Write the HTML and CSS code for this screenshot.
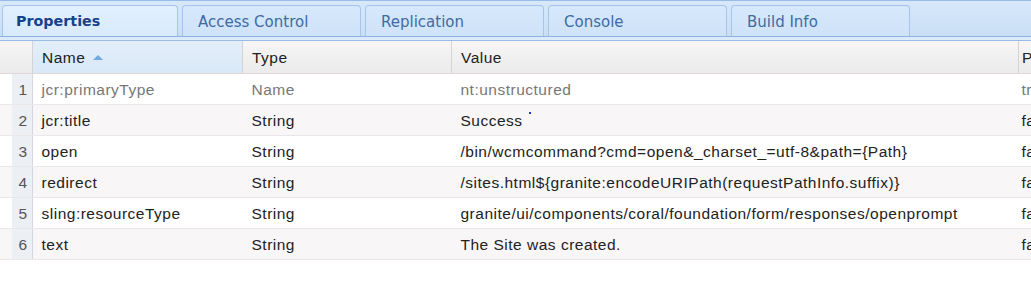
FILE: index.html
```html
<!DOCTYPE html>
<html lang="en">
<head>
    <meta charset="UTF-8">
    <title>CRXDE Properties</title>
    <link rel="stylesheet" href="styles.css">
</head>
<body>
    <div class="tabbar">
        <div class="tab active">Properties</div>
        <div class="tab">Access Control</div>
        <div class="tab">Replication</div>
        <div class="tab">Console</div>
        <div class="tab">Build Info</div>
    </div>
    <div class="tabbar-foot"></div>

    <div class="grid">
        <table>
            <thead>
                <tr>
                    <th class="num"><span></span></th>
                    <th class="col-name sorted">Name <span class="arrow"></span></th>
                    <th class="col-type">Type</th>
                    <th class="col-value">Value</th>
                    <th class="col-extra">P</th>
                </tr>
            </thead>
            <tbody>
                <tr class="dim">
                    <td class="num"><span>1</span></td>
                    <td>jcr:primaryType</td>
                    <td>Name</td>
                    <td>nt:unstructured</td>
                    <td class="extra">true</td>
                </tr>
                <tr>
                    <td class="num"><span>2</span></td>
                    <td>jcr:title</td>
                    <td>String</td>
                    <td>Success <span class="dot"></span></td>
                    <td class="extra">false</td>
                </tr>
                <tr>
                    <td class="num"><span>3</span></td>
                    <td>open</td>
                    <td>String</td>
                    <td>/bin/wcmcommand?cmd=open&amp;_charset_=utf-8&amp;path={Path}</td>
                    <td class="extra">false</td>
                </tr>
                <tr>
                    <td class="num"><span>4</span></td>
                    <td>redirect</td>
                    <td>String</td>
                    <td>/sites.html${granite:encodeURIPath(requestPathInfo.suffix)}</td>
                    <td class="extra">false</td>
                </tr>
                <tr>
                    <td class="num"><span>5</span></td>
                    <td>sling:resourceType</td>
                    <td>String</td>
                    <td>granite/ui/components/coral/foundation/form/responses/openprompt</td>
                    <td class="extra">false</td>
                </tr>
                <tr>
                    <td class="num"><span>6</span></td>
                    <td>text</td>
                    <td>String</td>
                    <td>The Site was created.</td>
                    <td class="extra">false</td>
                </tr>
            </tbody>
        </table>
    </div>
</body>
</html>
```

FILE: styles.css
```css
body {
    margin: 0;
    padding: 0;
    background: #fff;
    font-family: "Liberation Sans", Arial, sans-serif;
    overflow: hidden;
}

.tabbar {
    display: flex;
    gap: 4px;
    height: 31px;
    padding: 4px 0 0 2px;
    border-top: 1px solid #99bbe8;
    background: linear-gradient(#d7e8fa, #c9def5);
    border-bottom: 1px solid #8db2e3;
}

.tab {
    width: 162px;
    padding: 7px 0 0 15px;
    border: 1px solid #a7c4ea;
    border-bottom: none;
    border-radius: 4px 4px 0 0;
    background: linear-gradient(#d5e8fc, #cfe3f8);
    color: #416aa3;
    font-family: "DejaVu Sans", Tahoma, sans-serif;
    font-size: 15px;
    box-sizing: content-box;
}

.tab.active {
    width: 161px;
    padding-left: 13px;
    background: linear-gradient(#e2f0fe, #d8eafc);
    color: #15428b;
    font-weight: bold;
    font-size: 14.3px;
}

.tabbar-foot {
    height: 3px;
    background: #dbebfc;
    border-bottom: 1px solid #99bbe8;
}

.grid {
    width: 1031px;
    overflow: hidden;
}

table {
    border-collapse: collapse;
    table-layout: fixed;
    width: 1100px;
    font-size: 15.5px;
    letter-spacing: 0.5px;
}

th {
    height: 31px;
    padding: 1px 0 0 9px;
    text-align: left;
    font-weight: normal;
    color: #222;
    background: linear-gradient(#f7f5f6, #ebebeb);
    border-right: 1px solid #d6d3d3;
    border-bottom: 1px solid #e4d6d6;
}

th.sorted {
    background: linear-gradient(#e3eefa, #d9e8f7);
}

.arrow {
    display: inline-block;
    width: 0;
    height: 0;
    margin-left: 3px;
    vertical-align: 3px;
    border-left: 5px solid transparent;
    border-right: 5px solid transparent;
    border-bottom: 5px solid #72a9e0;
}

.col-name { width: 200px; }
.col-type { width: 199px; }
.col-value { width: 557px; }
.col-extra { padding-left: 3px; }

th.num, td.num {
    width: 32px;
    padding: 0;
}

th.num {
    background: linear-gradient(#f7f5f6, #ebebeb);
    border-right: 1px solid #d6d3d3;
}

td {
    height: 29px;
    padding: 1px 0 0 9px;
    color: #222;
    white-space: nowrap;
    overflow: hidden;
    border-bottom: 1px solid #e9e7e8;
}

td.extra {
    padding-left: 3px;
}

tbody tr:nth-child(even) td {
    background: #f8f6f7;
}

tr.dim td {
    color: #777;
}

td.num span {
    display: block;
    height: 30px;
    line-height: 31px;
    margin-left: 12px;
    padding-right: 4px;
    text-align: right;
    color: #555;
    background: #eceff3;
    border-right: 1px solid #d4d8de;
}

.dot {
    display: inline-block;
    width: 2px;
    height: 2px;
    margin-left: 2px;
    vertical-align: 12px;
    background: #1c3bd6;
}
```
